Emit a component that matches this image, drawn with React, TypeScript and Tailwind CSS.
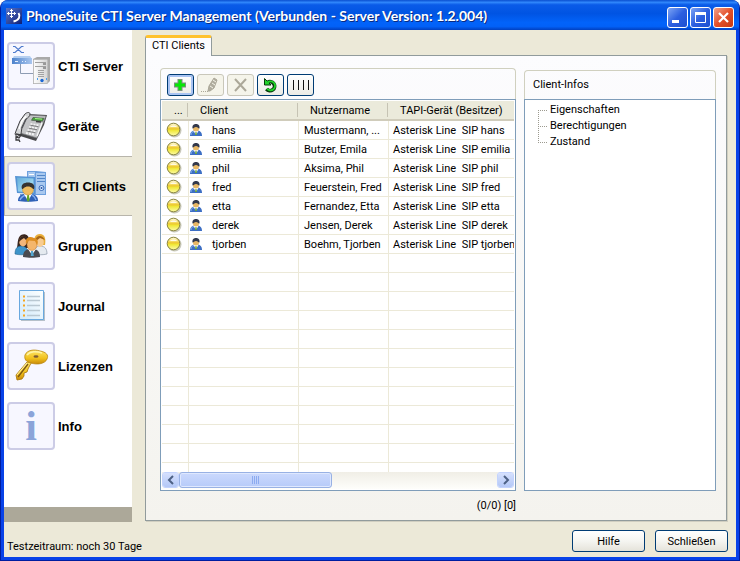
import { useState, type ReactNode } from "react";
import clsx from "clsx";

const clients = [
  { name: "hans", user: "Mustermann, ...", line: "hans" },
  { name: "emilia", user: "Butzer, Emila", line: "emilia" },
  { name: "phil", user: "Aksima, Phil", line: "phil" },
  { name: "fred", user: "Feuerstein, Fred", line: "fred" },
  { name: "etta", user: "Fernandez, Etta", line: "etta" },
  { name: "derek", user: "Jensen, Derek", line: "derek" },
  { name: "tjorben", user: "Boehm, Tjorben", line: "tjorben" },
];

const emptyRows = Array.from({ length: 40 }, (_, i) => i);

function NavSvg({ children }: { children: ReactNode }) {
  return (
    <svg viewBox="2 2 44 44" className="size-11" aria-hidden="true">
      {children}
    </svg>
  );
}

function ServerIcon() {
  return (
    <NavSvg>
      <defs>
        <linearGradient id="router" x1="0" x2="1">
          <stop offset="0" stopColor="#4d82cc" />
          <stop offset="1" stopColor="#a9c6ee" />
        </linearGradient>
        <linearGradient id="case" x1="0" x2="1">
          <stop offset="0" stopColor="#fdfdfd" />
          <stop offset="1" stopColor="#d5d5d5" />
        </linearGradient>
      </defs>
      <path d="M6 4.500h2L14.500 10.500H17M16.500 4.500h-2L8 10.500H6" fill="none" stroke="#4f7bcd" strokeWidth="1.200" />
      <path d="M13.500 22v9.500H27" fill="none" stroke="#8d9cb3" />
      <path d="M7 14h16l2 3H5z" fill="#b4cef0" />
      <rect x="5" y="16" width="20" height="6" fill="url(#router)" />
      <path d="M8 19.500h3M15 19.500h1M18 19.500h1" stroke="#e6f0ff" />
      <path d="M26 17l4-2h13v24l-3 3H26z" fill="#a9a9a9" />
      <rect x="26.500" y="17.500" width="14" height="24" rx="1" fill="url(#case)" stroke="#bdbdbd" />
      <path d="M28 20.500h11M28 24.500h11" stroke="#a0a0a0" />
      <path d="M36 22h3M36 26h3" stroke="#555" />
      <path d="M31 28.500h6M31 30.500h6M31 32.500h6M31 34.500h6" stroke="#a2a2a2" />
      <circle cx="35" cy="38.500" r="1.700" fill="#1c68d4" />
      <path d="M30 37h1M39 37h1" stroke="#49a0f0" strokeWidth="2" />
    </NavSvg>
  );
}

function PhoneIcon() {
  return (
    <NavSvg>
      <path d="M15 16l6-4 19 1-3 10-8 16-19-6z" fill="#48484a" />
      <path d="M17 15l5-2 17 1-9 22-17-5z" fill="#c3c4c6" stroke="#77787b" strokeWidth=".7" />
      <path d="M26 15.500l11 .8-1.500 3-11-1z" fill="#48a33c" stroke="#47544b" strokeWidth=".7" />
      <path d="M28 16.500l7 .6" stroke="#a5f18a" />
      <path d="M23.500 22l8 1.500M22 25l8 1.500M20.500 28l8 1.500M19 31l8 1.500" stroke="#f4f4f4" strokeWidth="2" strokeDasharray="2 1" />
      <path d="M23.500 23.200l8 1.500M22 26.200l8 1.500M20.500 29.200l8 1.500" stroke="#5a5a5c" strokeWidth=".7" />
      <path d="M35 21l-5 13" stroke="#f7f7f7" strokeWidth="1.400" />
      <path d="M29 19.500l5 .5" stroke="#3b3b3b" strokeWidth="1.500" />
      <path d="M9 29l4-10 5-7c2-2 5-2 5 0 0 2-2 4-4 5l-4 8-1 7-4 3-2-3z" fill="#d6d7d9" stroke="#414144" />
      <path d="M12 27l3-8 4-5" fill="none" stroke="#fff" strokeWidth="1.500" />
      <path d="M15 26l4-9" stroke="#55565a" strokeWidth="1.500" />
      <path d="M9 32l5 1-2 3-3-1v3h3l1 2" fill="none" stroke="#3c3c3e" strokeWidth="1.300" />
    </NavSvg>
  );
}

function ClientsIcon() {
  return (
    <NavSvg>
      <defs>
        <linearGradient id="screen" x1="0" y1="0" x2="1" y2="1">
          <stop offset="0" stopColor="#64acd9" />
          <stop offset="1" stopColor="#b9ecfb" />
        </linearGradient>
      </defs>
      <path d="M20 9h9l10 1v23H20z" fill="#6d9fdd" />
      <path d="M21 10h7v21h-7zM29 11h9v21h-9z" fill="#a9c8ef" />
      <path d="M30 13.500h8M30 16.500h8M30 19.500h8" stroke="#5386c9" />
      <path d="M22 12.500h5" stroke="#fff" />
      <circle cx="34.500" cy="26" r="2.500" fill="#dbebff" stroke="#3469b8" />
      <circle cx="34.500" cy="26" r="1" fill="#234fa0" />
      <path d="M8 14l20 1v17l-18-1z" fill="#5593d4" />
      <path d="M10 15.500l16.500 1v14L11 29.500z" fill="url(#screen)" />
      <path d="M13 32h10v2H13z" fill="#7b9fc9" />
      <path d="M11 39c0-4 2-6 6-7h8c4 1 6 3 6 7-5 1-15 1-20 0z" fill="#2f61b7" />
      <path d="M13 38c1-3 3-4 6-5M29 38c-1-3-2-4-4-5" fill="none" stroke="#7eabee" strokeWidth="1.400" />
      <path d="M17 32l4 7 4-7z" fill="#fff" />
      <path d="M20.300 33h1.600l.8 5-1.600 2-1.500-2z" fill="#63a925" />
      <ellipse cx="21" cy="27.500" rx="5.500" ry="5.500" fill="#eebd61" stroke="#b98533" strokeWidth=".5" />
      <path d="M15 27c-1.500-4.500 2-6.500 6-6.500s7.500 2 6 6.500c-2 0-2-2.500-6-2.500s-4 2.500-6 2.500z" fill="#373431" />
    </NavSvg>
  );
}

function GroupIcon() {
  return (
    <NavSvg>
      <path d="M10 26c1-4 0-10 4-13 4-2 8 0 8 5v8z" fill="#39251e" />
      <path d="M8 32c0-5 2-8 6-8 5 0 7 3 7 8-4 1-9 1-13 0z" fill="#3e94ca" stroke="#1e608c" strokeWidth=".6" />
      <ellipse cx="16" cy="19.500" rx="3.800" ry="5" fill="#f1b67b" />
      <path d="M12 20c0-5 3-6 6-6l3 6-4-4-3 2z" fill="#39251e" />
      <path d="M27 32c0-5 2-8 6-8 5 0 7 3 7 8-4 1-9 1-13 0z" fill="#e5eaf0" stroke="#8b98a8" strokeWidth=".7" />
      <path d="M28 23c-2-7 0-11 5-11 5 0 6 5 5 11z" fill="#e8ad3b" />
      <ellipse cx="33" cy="20" rx="3.800" ry="5" fill="#f8cc93" />
      <path d="M28 19c1-6 7-7 10-1l-5-2-4 3z" fill="#a76618" />
      <path d="M16 35c0-6 3-8 8.500-8s8.500 2 8.500 8c-5 1-12 1-17 0z" fill="#4a4b50" />
      <path d="M21 27l4 6 4-6z" fill="#fff" />
      <path d="M24 29h2l.8 5h-3z" fill="#56a8d0" />
      <ellipse cx="25" cy="22.500" rx="5" ry="6" fill="#f4b66c" stroke="#bd722c" strokeWidth=".5" />
      <path d="M19 22c-1-7 4-8 8-6 3 0 5 3 3 7l-2-4-6-.5z" fill="#dc8c20" />
    </NavSvg>
  );
}

function JournalIcon() {
  return (
    <NavSvg>
      <defs>
        <linearGradient id="page" x1="1" x2="0" y2="1">
          <stop offset="0" stopColor="#fdffff" />
          <stop offset="1" stopColor="#d0e9fb" />
        </linearGradient>
      </defs>
      <path d="M14 10h24v29H14z" fill="#b6c0c9" />
      <path d="M12.500 8.500h24v29h-24z" fill="url(#page)" stroke="#69a8df" />
      <path d="M20 14.500h13M20 18.500h13M20 23.500h13M20 28.500h13M20 33.500h13" stroke="#b9c8d2" strokeWidth="1.500" />
      <path d="M16 14.500h2M16 18.500h2M16 23.500h2M16 28.500h2M16 33.500h2" stroke="#f7a51d" strokeWidth="2" />
    </NavSvg>
  );
}

function KeyIcon() {
  return (
    <NavSvg>
      <defs>
        <linearGradient id="gold" x1="0" y1="0" x2="0" y2="1">
          <stop offset="0" stopColor="#ffe76b" />
          <stop offset=".6" stopColor="#f0c01c" />
          <stop offset="1" stopColor="#c98a0a" />
        </linearGradient>
      </defs>
      <path d="M20 20L9 33l1 5 5-1 2-3v-3l3-1 1-3 2-4 2-3z" fill="url(#gold)" stroke="#a87206" strokeWidth=".8" />
      <path d="M21 22L11 35" stroke="#785515" strokeWidth="1.300" />
      <path d="M20 21L10 33" stroke="#fff2a2" />
      <path d="M18 13c2-5 9-6 15-4 6 1 9 4 7 8-2 5-10 6-16 4-5-1-7-4-6-8z" fill="url(#gold)" stroke="#b98711" strokeWidth=".8" />
      <path d="M20 13c3-4 10-4 15-2" fill="none" stroke="#fff4a5" strokeWidth="1.500" />
      <ellipse cx="29" cy="14.500" rx="2.500" ry="1.300" fill="#7d5b35" />
    </NavSvg>
  );
}

function InfoIcon() {
  return <span className="font-['Liberation_Serif',serif] text-[42px] leading-[44px] font-bold text-[#8ba4d9]">i</span>;
}

const navItems = [
  { label: "CTI Server", icon: <ServerIcon /> },
  { label: "Geräte", icon: <PhoneIcon /> },
  { label: "CTI Clients", icon: <ClientsIcon /> },
  { label: "Gruppen", icon: <GroupIcon /> },
  { label: "Journal", icon: <JournalIcon /> },
  { label: "Lizenzen", icon: <KeyIcon /> },
  { label: "Info", icon: <InfoIcon /> },
];

function TitleBar() {
  const button =
    "flex size-[21px] items-center justify-center rounded-[3px] border border-white bg-linear-to-br from-[#7ea3f4] via-[#2c5fe0] to-[#1d4fd0]";
  return (
    <header className="flex h-[30px] shrink-0 items-center justify-between rounded-t-md bg-[linear-gradient(#0a4fd0,#2f86fb_8%,#0a5be8_16%,#0054e3_45%,#0263fa_75%,#0261f8_88%,#0140c0)] pr-[5px] pl-[5px]">
      <div className="flex items-center gap-1 pt-0.5">
        <svg viewBox="0 0 16 16" className="size-4" aria-hidden="true">
          <defs>
            <linearGradient id="logo" x1="0" y1="0" x2="1" y2="1">
              <stop offset="0" stopColor="#5a76c8" />
              <stop offset="1" stopColor="#0b1d76" />
            </linearGradient>
          </defs>
          <rect width="16" height="16" fill="url(#logo)" />
          <path d="M5.500 1v9M1 5.500h9M4 2.500h3M4 8.500h3M2.500 4v3M8.500 4v3" stroke="#fff" />
          <path d="M12.500 5c2 3 1 7-5 8.500" fill="none" stroke="#fff" strokeWidth="2" />
        </svg>
        <h1 className="font-['Lato',sans-serif] text-[14px] leading-5 font-bold whitespace-nowrap text-white [text-shadow:1px_1px_#0a2a80]">
          PhoneSuite CTI Server Management (Verbunden - Server Version: 1.2.004)
        </h1>
      </div>
      <div className="flex gap-0.5 pt-1">
        <button type="button" aria-label="Minimieren" className={button}>
          <svg viewBox="0 0 19 19" className="size-[19px]">
            <path d="M4 13.500h7" stroke="#fff" strokeWidth="3" />
          </svg>
        </button>
        <button type="button" aria-label="Maximieren" className={button}>
          <svg viewBox="0 0 19 19" className="size-[19px]" fill="none" stroke="#fff">
            <path d="M4.500 4v10.500h10V4" />
            <path d="M4 5.500h11" strokeWidth="3" />
          </svg>
        </button>
        <button
          type="button"
          aria-label="Fenster schließen"
          className="flex size-[21px] items-center justify-center rounded-[3px] border border-white bg-linear-to-br from-[#f0a088] via-[#e3502a] to-[#c8380f]"
        >
          <svg viewBox="0 0 19 19" className="size-[19px]">
            <path d="M5 5l9 9M14 5l-9 9" stroke="#fff" strokeWidth="2.200" />
          </svg>
        </button>
      </div>
    </header>
  );
}

function Sidebar() {
  const [active, setActive] = useState("CTI Clients");
  return (
    <nav className="flex w-32 shrink-0 flex-col bg-white">
      <div className="flex-1 pt-1.5">
        {navItems.map((item) => (
          <button
            key={item.label}
            type="button"
            onClick={() => setActive(item.label)}
            className={clsx(
              "flex h-15 w-full items-center gap-[3px] border-y border-l pl-0.5 text-left font-['Liberation_Sans',sans-serif] text-[13px] font-bold whitespace-nowrap",
              active === item.label ? "border-[#b8b5ab] bg-[#ece9d8]" : "border-transparent",
            )}
          >
            <span className="flex size-12 shrink-0 items-center justify-center rounded-[4px] border-2 border-[#cccce6] bg-[#f7f7ff]">
              {item.icon}
            </span>
            <span className="pt-0.5">{item.label}</span>
          </button>
        ))}
      </div>
      <div className="h-[15px] bg-[#aca899]" />
    </nav>
  );
}

function ToolButton({
  label,
  disabled,
  focused,
  children,
}: {
  label: string;
  disabled?: boolean;
  focused?: boolean;
  children: ReactNode;
}) {
  return (
    <button
      type="button"
      aria-label={label}
      disabled={disabled}
      className={clsx(
        "flex h-[22px] w-[27px] items-center justify-center rounded-[3px] border",
        disabled && "border-[#c9c7ba] bg-[#f5f4ea]",
        !disabled && "border-[#003c74] bg-linear-to-b from-white to-[#ecebe5]",
        focused && "shadow-[inset_0_0_0_2px_#a9c3f2]",
      )}
    >
      <svg viewBox="0 0 25 20" className="h-5 w-[25px] shrink-0" fill="none">
        {children}
      </svg>
    </button>
  );
}

function Toolbar() {
  return (
    <div className="flex gap-[3px] px-[6px] pt-[5px]">
      <ToolButton label="Hinzufügen" focused>
        <path d="M12 4v12M6 10h12" stroke="#78907c" strokeWidth="5" />
        <path d="M12 5v10M7 10h10" stroke="#06e806" strokeWidth="3" />
      </ToolButton>
      <ToolButton label="Bearbeiten" disabled>
        <path d="M10 16l1-5 5-8 3 2-3 8-4 3z" fill="#b0ad9f" stroke="#aca899" />
        <path d="M12 11l3 2M14 8l3 2M15 5l3 2" stroke="#f5f4ea" />
        <path d="M3 16.500h8" stroke="#aca899" strokeDasharray="1 1" />
      </ToolButton>
      <ToolButton label="Löschen" disabled>
        <path d="M7 4l11 12M18 4L7 16" stroke="#aca899" strokeWidth="2" />
      </ToolButton>
      <ToolButton label="Aktualisieren">
        <path d="M9.500 7.500a4.500 4.500 0 1 1-1 6.500" stroke="#073c0b" strokeWidth="3.800" />
        <path d="M6.500 3.500v6.500h6.500z" fill="#22d32b" stroke="#073c0b" />
        <path d="M9.500 7.500a4.500 4.500 0 1 1-.5 6" stroke="#22d32b" strokeWidth="1.800" />
      </ToolButton>
      <ToolButton label="Spalten">
        <path d="M5.500 5v10M10.500 5v10M15.500 5v10M20.500 5v10" stroke="#111" />
      </ToolButton>
    </div>
  );
}

function StatusDot() {
  return (
    <svg viewBox="0 0 16 16" className="ml-1 size-4" aria-label="Status">
      <defs>
        <linearGradient id="dot" x1="0" y1="0" x2="0" y2="1">
          <stop offset="0" stopColor="#fffde0" />
          <stop offset=".35" stopColor="#f5d95a" />
          <stop offset=".45" stopColor="#ecc52c" />
          <stop offset=".55" stopColor="#efe632" />
          <stop offset="1" stopColor="#fdfda8" />
        </linearGradient>
      </defs>
      <circle cx="8.500" cy="8.500" r="7" fill="#c9c9bc" />
      <circle cx="7.500" cy="7.500" r="6.300" fill="url(#dot)" stroke="#8a8640" />
      <path d="M4 5c1-2 6-2 7 0z" fill="#fff" opacity=".8" />
    </svg>
  );
}

function UserIcon() {
  return (
    <svg viewBox="0 0 14 14" className="size-3.5 shrink-0" aria-hidden="true">
      <path d="M1 13c0-4 2-5 4-5.500h4c2 .5 4 1.500 4 5.500z" fill="#3d6fc4" />
      <path d="M2 12c0-2 1-3 3-3.500" fill="none" stroke="#8ab4ef" />
      <path d="M4.500 8L7 12l2.500-4z" fill="#fff" />
      <path d="M6.500 9h1l.5 3H6z" fill="#68a533" />
      <circle cx="7" cy="5.500" r="3" fill="#e7b765" />
      <path d="M3.500 5.500C3 2 5 1 7 1s4 1 3.500 4.500C9 5.500 9 4 7 4s-2 1.500-3.500 1.500z" fill="#33394b" />
    </svg>
  );
}

function ClientTable() {
  const head = "h-5 border-b-2 border-[#d0ccbb] bg-[#ebeadb] p-0 text-left font-normal";
  const cell = "h-[19px] border-b border-[#ece9d8] p-0";
  const split = "block h-3.5 border-r border-[#c6c3b4]";
  return (
    <table className="w-full table-fixed border-separate border-spacing-0 whitespace-nowrap">
      <colgroup>
        <col className="w-[27px]" />
        <col className="w-[110px]" />
        <col className="w-[90px]" />
        <col />
      </colgroup>
      <thead>
        <tr>
          <th className={head}>
            <span className={clsx(split, "mr-px pl-3 leading-[16px]")}>...</span>
          </th>
          <th className={head}>
            <span className={clsx(split, "mr-px pl-[11px] leading-[16px]")}>Client</span>
          </th>
          <th className={head}>
            <span className={clsx(split, "mr-px pl-[11px] leading-[16px]")}>Nutzername</span>
          </th>
          <th className={head}>
            <span className="block h-3.5 pl-[11px] leading-[16px]">TAPI-Gerät (Besitzer)</span>
          </th>
        </tr>
      </thead>
      <tbody>
        {clients.map((client) => (
          <tr key={client.name}>
            <td className={clsx(cell, "border-r")}>
              <StatusDot />
            </td>
            <td className={clsx(cell, "border-r")}>
              <span className="flex items-center gap-[9px]">
                <UserIcon />
                <span className="pt-0.5">{client.name}</span>
              </span>
            </td>
            <td className={clsx(cell, "border-r pt-0.5 pl-[5px]")}>{client.user}</td>
            <td className={clsx(cell, "pt-0.5 pl-1 whitespace-pre")}>{`Asterisk Line  SIP ${client.line}`}</td>
          </tr>
        ))}
        {emptyRows.map((row) => (
          <tr key={row}>
            <td className={clsx(cell, "border-r")} />
            <td className={clsx(cell, "border-r")} />
            <td className={clsx(cell, "border-r")} />
            <td className={cell} />
          </tr>
        ))}
      </tbody>
    </table>
  );
}

function ScrollBar() {
  const arrow =
    "flex h-4 w-[17px] items-center justify-center rounded-[3px] border border-white bg-linear-to-b from-[#d5e0fd] to-[#b4c8f6] outline -outline-offset-1 outline-[#c3d3fd]";
  return (
    <div className="flex h-[17px] shrink-0 bg-linear-to-b from-[#f0eee6] to-[#fefefb]">
      <button type="button" aria-label="Nach links" className={arrow}>
        <svg viewBox="0 0 8 10" className="h-2.5 w-2" fill="none" stroke="#4d6185" strokeWidth="2">
          <path d="M6 1L2 5l4 4" />
        </svg>
      </button>
      <div className="flex-1">
        <div className="flex h-4 w-[48%] items-center justify-center gap-px rounded-[3px] border border-[#98b1e4] bg-linear-to-b from-[#cbd9fd] to-[#b7cbf9] shadow-[inset_0_0_0_1px_#dfe8fe]">
          <i className="h-2 w-px bg-[#8cabf0]" />
          <i className="h-2 w-px bg-[#8cabf0]" />
          <i className="h-2 w-px bg-[#8cabf0]" />
          <i className="h-2 w-px bg-[#8cabf0]" />
        </div>
      </div>
      <button type="button" aria-label="Nach rechts" className={arrow}>
        <svg viewBox="0 0 8 10" className="h-2.5 w-2" fill="none" stroke="#4d6185" strokeWidth="2">
          <path d="M2 1l4 4-4 4" />
        </svg>
      </button>
    </div>
  );
}

function InfoTree() {
  return (
    <ul className="pt-0.5 pl-[13px] leading-4">
      {["Eigenschaften", "Berechtigungen", "Zustand"].map((label, i) => (
        <li key={label} className="flex h-4 gap-[3px]">
          <svg viewBox="0 0 9 16" className="h-4 w-[9px]" fill="none" stroke="#9c9a8f" strokeDasharray="1 1" aria-hidden="true">
            <path d={i === 0 ? "M.5 8v8" : i === 2 ? "M.5 0v8" : "M.5 0v16"} />
            <path d="M0 8.500h9" />
          </svg>
          {label}
        </li>
      ))}
    </ul>
  );
}

function ClientsPanel() {
  return (
    <main className="flex min-w-0 flex-1 flex-col pt-[5px] pr-[9px] pb-px pl-[13px]">
      <div role="tablist" className="z-10 -mb-px flex">
        <button
          type="button"
          role="tab"
          aria-selected="true"
          className="h-[21px] w-[67px] rounded-t-[3px] border-x border-t-3 border-x-[#919b9c] border-t-[#ffc22e] bg-[#fcfcfe] pb-0.5 whitespace-nowrap"
        >
          CTI Clients
        </button>
      </div>
      <section className="grid min-h-0 flex-1 grid-cols-[minmax(0,1fr)_192px] grid-rows-[minmax(0,1fr)_29px] gap-x-2 border border-[#919b9c] bg-linear-to-b from-[#fcfcfe] to-[#f4f3ee] pt-3 pr-2.5 pl-3.5 shadow-[1px_1px_#d0cec0]">
        <div className="flex min-h-0 flex-col">
          <div className="h-[31px] shrink-0 rounded-t-[4px] border border-b-0 border-[#d0d0bf]">
            <Toolbar />
          </div>
          <div className="flex min-h-0 flex-1 flex-col border border-[#7f9db9] bg-white p-px">
            <div className="min-h-0 flex-1 overflow-hidden">
              <ClientTable />
            </div>
            <ScrollBar />
          </div>
        </div>
        <div className="flex min-h-0 flex-col pt-0.5">
          <h2 className="h-[29px] shrink-0 rounded-t-[4px] border border-b-0 border-[#d0d0bf] pl-2 leading-[28px]">Client-Infos</h2>
          <div className="flex-1 border border-[#7f9db9] bg-white">
            <InfoTree />
          </div>
        </div>
        <p className="text-right leading-[30px]">(0/0) [0]</p>
      </section>
    </main>
  );
}

export default function App() {
  const button =
    "h-[22px] w-[73px] rounded-[3px] border border-[#003c74] bg-linear-to-b from-white via-[#f5f5f1] to-[#e5e3da] pt-0.5";
  return (
    <div className="flex h-screen flex-col overflow-hidden rounded-t-lg border-x border-b border-[#001da0] bg-[#0855dd] font-['Roboto',sans-serif] text-[11px] leading-[14px] text-black">
      <TitleBar />
      <div className="flex min-h-0 flex-1 flex-col border-x-3 border-b-3 border-[#0842e8] bg-[#ece9d8]">
        <div className="flex min-h-0 flex-1">
          <Sidebar />
          <ClientsPanel />
        </div>
        <footer className="flex h-[35px] shrink-0 items-start justify-between pt-2 pr-2 pl-[3px]">
          <p className="pt-2.5">Testzeitraum: noch 30 Tage</p>
          <div className="flex gap-2.5">
            <button type="button" className={button}>
              Hilfe
            </button>
            <button type="button" className={button}>
              Schließen
            </button>
          </div>
        </footer>
      </div>
    </div>
  );
}
